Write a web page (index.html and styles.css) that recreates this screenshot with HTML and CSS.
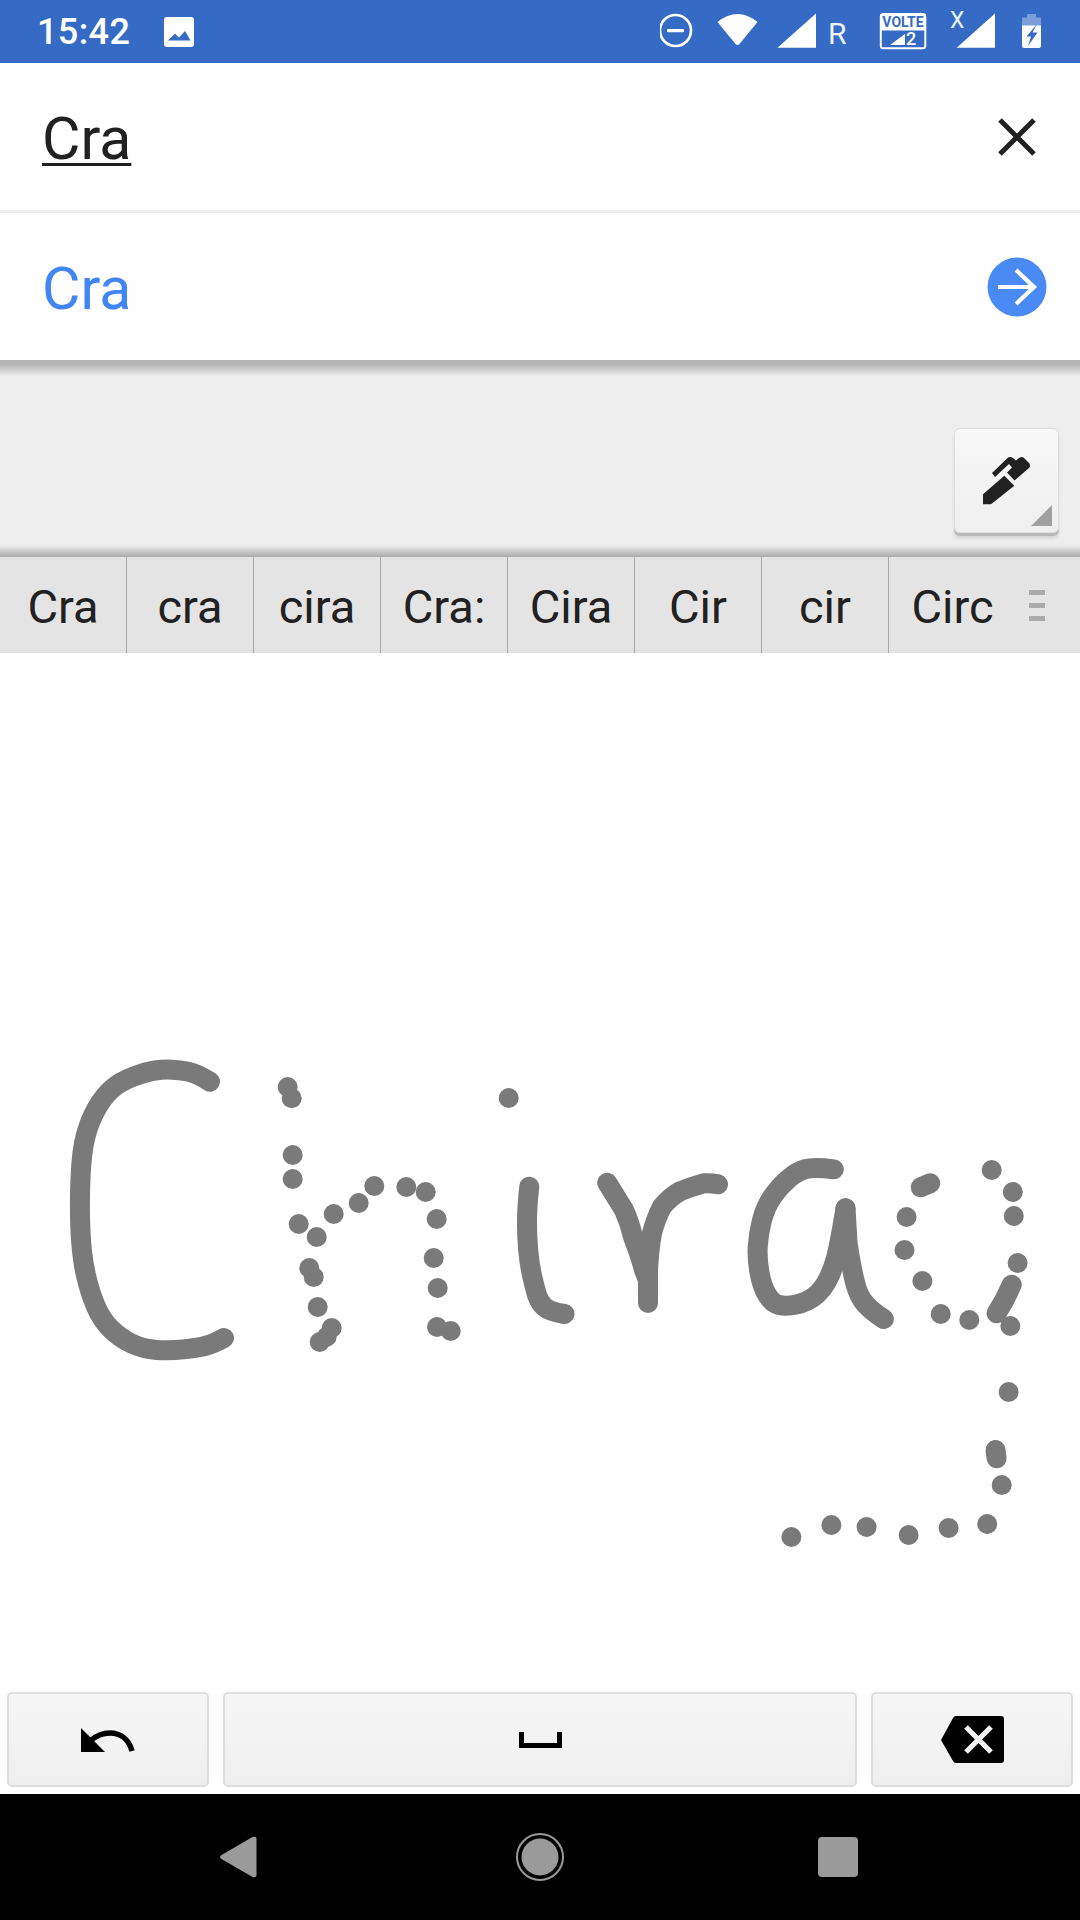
FILE: index.html
```html
<!DOCTYPE html>
<html lang="en">
<head>
    <meta charset="UTF-8">
    <title>Handwriting input</title>
    <link rel="stylesheet" href="styles.css">
</head>
<body>
<main class="screen">
    <header class="status-bar">
        <div class="status-left">
            <span class="clock">15:42</span>
            <svg class="icon-picture" viewBox="0 0 30 30">
                <rect width="30" height="30" rx="3" fill="#fff"/>
                <path d="M4 23.5 L11 16.5 L15 20.5 L21 14 L26.5 23.5 Z" fill="#356bc4"/>
            </svg>
        </div>
        <svg class="status-icons" viewBox="660 0 400 63">
            <circle cx="675.5" cy="30.5" r="15.5" fill="none" stroke="#fff" stroke-width="2.6"/>
            <rect x="667" y="29" width="17" height="3.2" rx="1" fill="#fff"/>
            <path d="M717.5 22 Q737.5 6 757.5 22 L739.5 44 Q737.5 46 735.5 44 Z" fill="#fff"/>
            <path d="M777.5 47.7 L816 13.5 V47.7 Z" fill="#fff"/>
            <rect x="880.8" y="14" width="44.5" height="34.2" rx="2.5" fill="none" stroke="#fff" stroke-width="2"/>
            <rect x="880.8" y="14" width="44.5" height="16.5" fill="#fff"/>
            <path d="M890 45 L905 34 V45 Z" fill="#fff"/>
            <path d="M956.7 47.7 L995 13.5 V47.7 Z" fill="#fff"/>
            <path d="M1027 14 H1036 V17.5 H1041 V26 H1022 V17.5 H1027 Z" fill="#fff" opacity="0.35"/>
            <path d="M1022 25.5 H1041 V46 Q1041 48 1039 48 H1024 Q1022 48 1022 46 Z" fill="#fff"/>
            <path d="M1037 24 L1026.5 36.5 H1031 L1028 46 L1037.5 32.5 H1032.5 Z" fill="#356bc4"/>
        </svg>
        <span class="status-label roaming">R</span>
        <span class="status-label volte">VOLTE</span>
        <span class="status-label sim">2</span>
        <span class="status-label no-data">X</span>
    </header>

    <section class="query-row">
        <span class="query-text">Cra</span>
        <svg class="icon-close" viewBox="0 0 38 38">
            <path d="M2 2 L36 36 M36 2 L2 36" stroke="#212121" stroke-width="5" fill="none"/>
        </svg>
    </section>

    <section class="suggest-row">
        <span class="suggest-text">Cra</span>
        <svg class="icon-go" viewBox="0 0 60 60">
            <circle cx="30" cy="30" r="29.5" fill="#4a8af4"/>
            <path d="M11 30 H47 M29 13 L47 30 L29 47" stroke="#fff" stroke-width="4.2" fill="none"/>
        </svg>
    </section>

    <section class="tool-panel">
        <div class="pen-button">
            <svg class="icon-pen" viewBox="970 445 70 70">
                <path d="M982 504.3 V494.3 L1003.3 475.7 L1013.3 485.7 L990 504.3 Z" fill="#212121"/>
                <path d="M991 473 L1006 458.5 Q1009 456 1012 458 L1015 460.5 L1018 458 Q1021 456 1023 458 L1028 463 Q1030 466 1028 468 L1013.5 480.5 L1006 472.5 L1011 467.5 L1008 464 L994 477 Z" fill="#212121"/>
            </svg>
            <span class="pen-corner"></span>
        </div>
    </section>

    <nav class="candidates">
        <span class="candidate">Cra</span>
        <span class="candidate">cra</span>
        <span class="candidate">cira</span>
        <span class="candidate">Cra:</span>
        <span class="candidate">Cira</span>
        <span class="candidate">Cir</span>
        <span class="candidate">cir</span>
        <span class="candidate">Circ</span>
        <span class="candidate-menu"><i></i><i></i><i></i></span>
    </nav>

    <section class="canvas">
        <svg class="ink" viewBox="0 653 1080 1141">
            <g class="ink-strokes">
                <!-- C -->
                <path d="M210 1081.7 Q196.7 1073.3 188.4 1071.7 Q180 1070 171.7 1069.7 Q163.3 1069.3 155 1070.5 Q146.7 1071.7 133.4 1076.7 Q120 1081.7 111.7 1089.2 Q103.3 1096.7 96.7 1108.4 Q90 1120 85.9 1135 Q81.7 1150 80.5 1178 Q79.3 1206.7 80.5 1231.7 Q81.7 1256.7 85.9 1275 Q90 1293 95.9 1306.5 Q101.7 1320 110.9 1329 Q120 1338 131.5 1343.5 Q143 1349 156.5 1349.9 Q170 1350.7 183.4 1349.4 Q196.7 1348 204.9 1346 Q213 1344 224 1338"/>
                <!-- i -->
                <path d="M529.3 1186.7 Q527 1206.7 527 1221.7 Q527 1236.7 528.2 1250 Q529.3 1263 531.9 1275 Q534.5 1286.7 537 1295 Q539.7 1303 544.9 1307.4 Q550 1311.7 564.5 1314"/>
                <!-- r -->
                <path d="M607.2 1182.7 L624 1210 Q630 1223 633 1237 Q640 1255 644 1270 L648 1280 L648 1303"/>
                <path d="M648 1290 L648 1270 Q649 1250 652 1233 Q656 1218 662 1206.7 Q670 1197 679.3 1191.7 Q690 1187 703.4 1183.3 Q712 1183 718 1184.3"/>
                <!-- a -->
                <path d="M833.8 1169.3 Q813.8 1166.7 805.2 1169.2 Q796.6 1171.7 788 1179.2 Q779.3 1186.7 772.4 1196.7 Q765.5 1206.7 762 1220 Q758.6 1233.3 757.8 1245.8 Q756.9 1258.3 759.5 1272.5 Q762 1286.7 767.2 1295 Q772.4 1303.3 779.3 1305 Q786.2 1306.7 796.6 1304.5 Q806.9 1302.3 814.7 1296.2 Q822.4 1290 827.6 1280 Q832.8 1270 836.3 1256.7 Q839.7 1243.3 845.5 1208.3"/>
                <path d="M845.5 1208.3 L847.6 1243.3 Q851.7 1270 855.2 1283 Q858.6 1296.7 865.5 1304.2 Q872.4 1311.7 883.8 1319"/>
                <!-- pieces of the g -->
                <path d="M920.7 1187.3 L930.3 1183.3"/>
                <path d="M1011.7 1284.7 Q1005.2 1300 996.6 1313.3"/>
                <path d="M995.5 1450 L996.6 1458.3"/>
            </g>
            <g class="ink-dots">
                <circle cx="287.7" cy="1087" r="10"/>
                <circle cx="291.7" cy="1098.3" r="10"/>
                <circle cx="292.7" cy="1155" r="10"/>
                <circle cx="292.7" cy="1179" r="10"/>
                <circle cx="298.7" cy="1224" r="10"/>
                <circle cx="316.7" cy="1237" r="10"/>
                <circle cx="333.7" cy="1214" r="10"/>
                <circle cx="358.7" cy="1203" r="10"/>
                <circle cx="374.3" cy="1186" r="10"/>
                <circle cx="406.3" cy="1187" r="10"/>
                <circle cx="425.7" cy="1192" r="10"/>
                <circle cx="436.7" cy="1219" r="10"/>
                <circle cx="433.7" cy="1258" r="10"/>
                <circle cx="437.7" cy="1288" r="10"/>
                <circle cx="437" cy="1327" r="10"/>
                <circle cx="450.7" cy="1331" r="10"/>
                <circle cx="309.3" cy="1268" r="10"/>
                <circle cx="313.7" cy="1277" r="10"/>
                <circle cx="317.7" cy="1307" r="10"/>
                <circle cx="331.7" cy="1328" r="10"/>
                <circle cx="326.7" cy="1336.7" r="10"/>
                <circle cx="319.7" cy="1342" r="10"/>
                <circle cx="508.7" cy="1098" r="10"/>
                <circle cx="991.7" cy="1170" r="10"/>
                <circle cx="1012.8" cy="1192" r="10"/>
                <circle cx="1013.8" cy="1216" r="10"/>
                <circle cx="906.6" cy="1217" r="10"/>
                <circle cx="904.5" cy="1250" r="10"/>
                <circle cx="1017.6" cy="1263" r="10"/>
                <circle cx="922.4" cy="1281" r="10"/>
                <circle cx="940.7" cy="1314" r="10"/>
                <circle cx="969.3" cy="1320" r="10"/>
                <circle cx="1010.3" cy="1326" r="10"/>
                <circle cx="1008.6" cy="1392" r="10"/>
                <circle cx="1001.7" cy="1485" r="10"/>
                <circle cx="987.2" cy="1524" r="10"/>
                <circle cx="948.6" cy="1528" r="10"/>
                <circle cx="908.6" cy="1535" r="10"/>
                <circle cx="866.6" cy="1527" r="10"/>
                <circle cx="831.4" cy="1525" r="10"/>
                <circle cx="791.4" cy="1537" r="10"/>
            </g>
        </svg>
        <div class="keys">
            <div class="key key-undo">
                <svg class="icon-undo" viewBox="0 0 54 24">
                    <path d="M0 0 L24 24 H0 Z" fill="#000"/>
                    <path d="M9 13 C16 7 23 5 29 5 C40 5 48 12 51 23" stroke="#000" stroke-width="5.5" fill="none"/>
                </svg>
            </div>
            <div class="key key-space">
                <svg class="icon-space" viewBox="0 0 43 16">
                    <path d="M2.5 0 V13.5 H40.5 V0" stroke="#000" stroke-width="5" fill="none"/>
                </svg>
            </div>
            <div class="key key-delete">
                <svg class="icon-delete" viewBox="0 0 63 47">
                    <path d="M15 0 H60 Q63 0 63 3 V44 Q63 47 60 47 H15 Q13 47 12 45 L0 24 L12 2 Q13 0 15 0 Z" fill="#000"/>
                    <path d="M25 11 L50 36 M50 11 L25 36" stroke="#f3f3f3" stroke-width="5.2" fill="none"/>
                </svg>
            </div>
        </div>
    </section>

    <footer class="nav-bar">
        <svg class="icon-back" viewBox="0 0 37 42">
            <path d="M2 19 L33 1 Q37 0 37 3 V39 Q37 42 33 41 L2 23 Q-1 21 2 19 Z" fill="#9a9a9a"/>
        </svg>
        <svg class="icon-home" viewBox="0 0 48 48">
            <circle cx="24" cy="24" r="23" fill="none" stroke="#9a9a9a" stroke-width="2"/>
            <circle cx="24" cy="24" r="18.5" fill="#9a9a9a"/>
        </svg>
        <span class="icon-recent"></span>
    </footer>
</main>
</body>
</html>
```

FILE: styles.css
```css
* {
    box-sizing: border-box;
    font-family: 'Roboto', sans-serif;
}

body {
    margin: 0;
    background-color: white;
}

.screen {
    width: 1080px;
    height: 1920px;
    display: flex;
    flex-direction: column;
    overflow: hidden;
}

.status-bar {
    position: relative;
    flex: 0 0 63px;
    display: flex;
    align-items: center;
    background-color: #356bc4;
    color: white;
}

.status-left {
    display: flex;
    align-items: center;
    padding: 1px 0 0 37px;
    gap: 34px;
}

.clock {
    font-size: 36px;
    font-weight: 500;
    letter-spacing: 0.4px;
}

.icon-picture {
    width: 30px;
    height: 30px;
}

.status-icons {
    position: absolute;
    left: 660px;
    top: 0;
    width: 400px;
    height: 63px;
}

.status-label {
    position: absolute;
    line-height: 1;
}

.roaming {
    left: 828px;
    top: 19px;
    font-size: 30px;
    color: #eef2fa;
}

.volte {
    left: 881px;
    top: 15px;
    width: 44px;
    font-size: 14px;
    font-weight: 700;
    text-align: center;
    color: #356bc4;
}

.sim {
    left: 906px;
    top: 30px;
    font-size: 18px;
    font-weight: 500;
}

.no-data {
    left: 950px;
    top: 9px;
    font-size: 23px;
    color: #eef2fa;
}

.query-row,
.suggest-row {
    flex: 0 0 147px;
    display: flex;
    align-items: center;
    justify-content: space-between;
    padding: 0 44px 0 42px;
    background-color: white;
}

.query-text {
    margin-top: 5px;
    font-size: 59px;
    line-height: 60px;
    color: #212121;
    text-decoration: underline;
    text-decoration-thickness: 3px;
    text-underline-offset: 4px;
}

.suggest-text {
    margin-top: 4px;
    font-size: 59px;
    color: #4285f4;
}

.icon-close {
    width: 38px;
    height: 38px;
    margin-right: 0;
}

.icon-go {
    width: 60px;
    height: 60px;
    margin-right: -11px;
}

.suggest-row {
    border-top: 3px solid #eeeeee;
    flex-basis: 150px;
}

.tool-panel {
    flex: 0 0 197px;
    display: flex;
    justify-content: flex-end;
    padding: 68px 21px 0 0;
    background: linear-gradient(#b5b5b5 0, #b8b8b8 5px, #eeeeee 16px, #eeeeee 185px, #aaaaaa 197px);
}

.pen-button {
    position: relative;
    width: 105px;
    height: 105px;
    border: 1px solid #dddddd;
    border-radius: 6px;
    background: linear-gradient(#f8f8f8, #efefef);
    box-shadow: 0 3px 0 #b9b9b9, 0 6px 3px #d8d8d8;
}

.icon-pen {
    position: absolute;
    left: 16px;
    top: 16px;
    width: 70px;
    height: 70px;
}

.pen-corner {
    position: absolute;
    right: 6px;
    bottom: 6px;
    border-style: solid;
    border-width: 0 0 21px 21px;
    border-color: transparent transparent #a0a0a0 transparent;
}

.candidates {
    flex: 0 0 96px;
    display: grid;
    grid-template-columns: repeat(8, 127px) 1fr;
    background-color: #e4e4e4;
}

.candidate {
    display: flex;
    align-items: center;
    justify-content: center;
    padding-top: 3px;
    font-size: 47px;
    color: #212121;
    border-right: 1px solid #a8a8a8;
}

.candidate:nth-child(8) {
    border-right: none;
}

.candidate-menu {
    display: flex;
    flex-direction: column;
    justify-content: center;
    gap: 8px;
    margin-left: 13px;
    width: 16px;
}

.candidate-menu i {
    height: 5px;
    background-color: #aaaaaa;
}

.canvas {
    position: relative;
    flex: 1;
    background-color: white;
}

.ink {
    display: block;
    width: 1080px;
    height: 1141px;
}

.ink-strokes path {
    fill: none;
    stroke: #7a7a7a;
    stroke-width: 20;
    stroke-linecap: round;
    stroke-linejoin: round;
}

.ink-dots circle {
    fill: #7a7a7a;
}

.keys {
    position: absolute;
    left: 7px;
    right: 7px;
    bottom: 7px;
    display: flex;
    gap: 14px;
}

.key {
    height: 95px;
    display: flex;
    align-items: center;
    justify-content: center;
    border: 2px solid #dddddd;
    border-radius: 5px;
    background: linear-gradient(#f6f6f6, #efefef);
}

.key-undo {
    flex: 0 0 202px;
}

.key-space {
    flex: 1;
}

.key-delete {
    flex: 0 0 202px;
}

.icon-undo {
    width: 54px;
    height: 24px;
}

.icon-space {
    width: 43px;
    height: 16px;
}

.icon-delete {
    width: 63px;
    height: 47px;
}

.nav-bar {
    position: relative;
    flex: 0 0 126px;
    background-color: black;
}

.nav-bar > * {
    position: absolute;
}

.icon-back {
    left: 219px;
    top: 42px;
    width: 38px;
    height: 42px;
}

.icon-home {
    left: 516px;
    top: 39px;
    width: 48px;
    height: 48px;
}

.icon-recent {
    left: 818px;
    top: 43px;
    width: 40px;
    height: 40px;
    border-radius: 4px;
    background-color: #9a9a9a;
}
```
